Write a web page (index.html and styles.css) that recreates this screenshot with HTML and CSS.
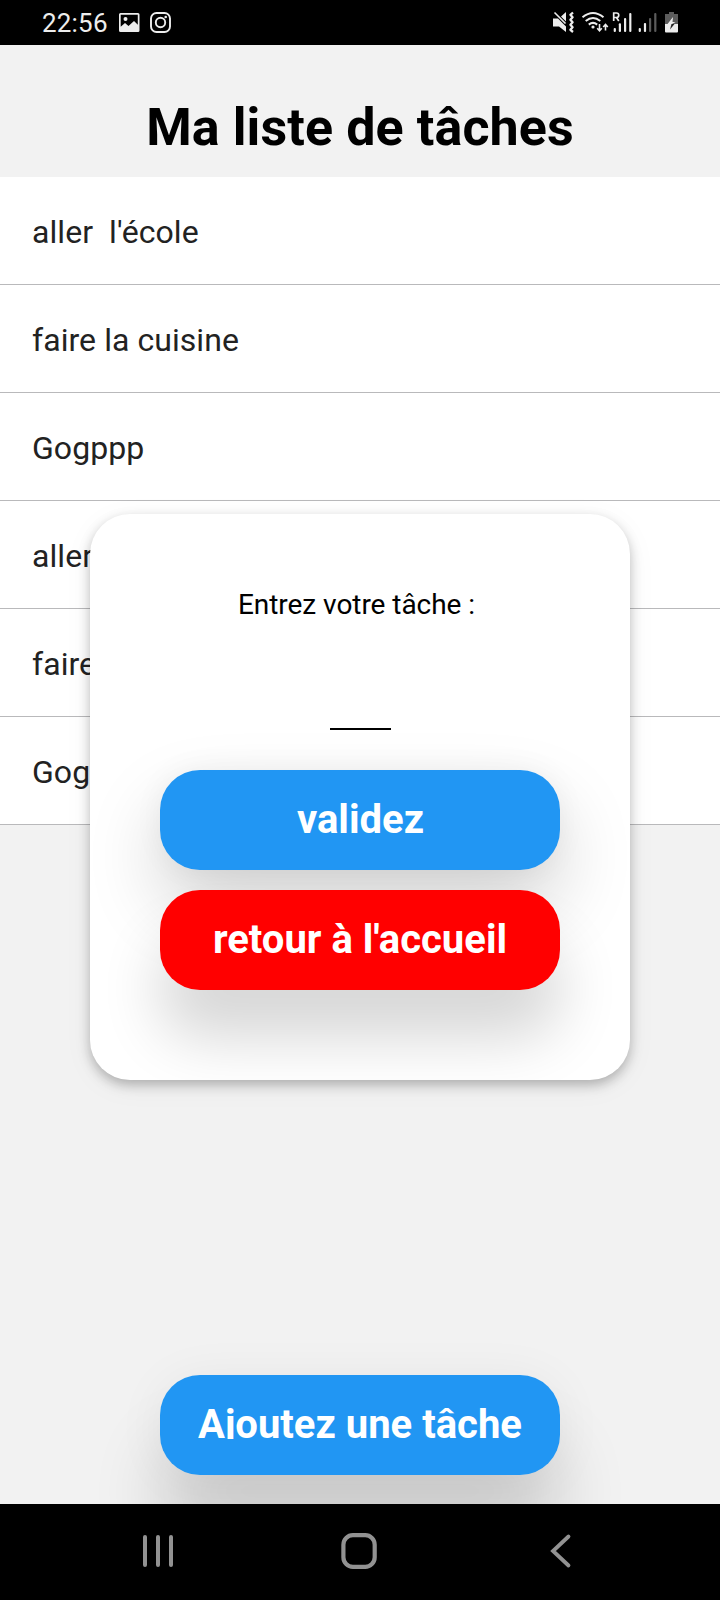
FILE: index.html
```html
<!DOCTYPE html>
<html lang="fr">
<head>
<meta charset="utf-8">
<title>Ma liste de tâches</title>
<link rel="stylesheet" href="styles.css">
</head>
<body>
<div class="phone">
  <header class="status">
    <span class="clock">22:56</span>
    <svg class="status-left" width="54" height="24" viewBox="118 10 54 24">
      <path fill="#ededed" fill-rule="evenodd" d="M120.500 13h17.500q1.500 0 1.500 1.500v16q0 1.500-1.500 1.500h-17.500q-1.500 0-1.500-1.500v-16q0-1.500 1.500-1.500zM120.700 14.700v12l4.300-3.700 3.500 3 5.500-5 3.800 3.800v-10.100zM125.500 17a2 2 0 1 1 0 4 2 2 0 0 1 0-4z"/>
      <g fill="none" stroke="#ededed" stroke-width="1.900"><rect x="151" y="13" width="19" height="19" rx="5.500"/><circle cx="160.500" cy="22.500" r="4.700"/></g><circle cx="165.700" cy="17" r="1.300" fill="#ededed"/>
    </svg>
    <svg class="status-right" width="130" height="24" viewBox="550 10 130 24">
      <path fill="#ededed" d="M553 18.500h5l8 8V32l-7-5.500h-6zM561 16.500l5-4.500v9.500z"/>
      <path d="M554.500 12.500l11 11" fill="none" stroke="#ededed" stroke-width="1.600"/>
      <path d="M573 12.500l-2.600 2.300 2.200 2.500-2.200 2.500 2.200 2.500-2.200 2.500 2.200 2.500-2.200 2.500 2.600 2.200" fill="none" stroke="#ededed" stroke-width="2.300" stroke-linejoin="round"/>
      <g fill="none" stroke="#ededed" stroke-width="2"><path d="M582.500 17.300q10.500-8.600 21 0M585.700 21q7.300-6 14.600 0M588.800 24.600q4.200-3.400 8.400 0"/></g>
      <circle cx="593" cy="27" r="1.600" fill="#ededed"/>
      <path d="M599.500 24v6.500M597.200 28.200l2.300 2.500 2.300-2.500M605.500 30.500V25M603.200 27l2.300-2.500 2.300 2.500" fill="none" stroke="#ededed" stroke-width="1.600"/>
      <path d="M613.700 21v-8h2.800a2.200 2.200 0 0 1 0 4.500h-2.800M616.400 17.500l2.400 3.500" fill="none" stroke="#ededed" stroke-width="1.700"/>
      <g fill="#ededed"><rect x="613.700" y="28" width="2.200" height="4" rx="1"/><rect x="618.800" y="23.300" width="2.200" height="8.700" rx="1"/><rect x="624" y="18" width="2.200" height="14" rx="1"/><rect x="629.200" y="13" width="2.200" height="19" rx="1"/><rect x="638.700" y="28" width="2.200" height="4" rx="1"/><rect x="643.900" y="23" width="2.200" height="9" rx="1"/></g>
      <g fill="#5c5c5c"><rect x="649" y="18" width="2.200" height="14" rx="1"/><rect x="654.200" y="13" width="2.200" height="19" rx="1"/><path d="M669 12h5v2h4v10h-13V14h4z"/></g>
      <path fill="#ededed" d="M665 24h13v7.500q0 1-1 1h-11q-1 0-1-1z"/>
      <path fill="#ededed" d="M673 17l-5.500 7h4.500l3.500-2h-3z"/>
      <path fill="#222" d="M671.500 24h3l-4.500 5.500z"/>
    </svg>
  </header>

  <main class="screen">
    <h1 class="title">Ma liste de tâches</h1>
    <ul class="tasks">
      <li class="task">aller&nbsp; l'école</li>
      <li class="task">faire la cuisine</li>
      <li class="task">Gogppp</li>
      <li class="task">aller&nbsp; l'école</li>
      <li class="task">faire la cuisine</li>
      <li class="task">Gogppp</li>
    </ul>
    <div class="actions">
      <button class="btn btn-add"><span class="btn-label">Ajoutez une tâche</span></button>
    </div>
  </main>

  <nav class="navbar">
    <svg width="36" height="40" viewBox="140 1531 36 40" stroke="#929292" stroke-width="4" stroke-linecap="round"><path d="M145 1537v28M158 1537v28M171 1537v28"/></svg>
    <svg class="nav-home" width="40" height="40" viewBox="339 1531 40 40" fill="none" stroke="#929292" stroke-width="4.200"><rect x="343.400" y="1535.200" width="31.300" height="31.600" rx="9.500"/></svg>
    <svg class="nav-back" width="26" height="40" viewBox="547 1531 26 40" fill="none" stroke="#929292" stroke-width="3.800" stroke-linecap="round"><path d="M568.500 1536.500L553 1551l15.500 14.500"/></svg>
  </nav>

  <section class="modal">
    <p class="prompt">Entrez votre tâche :</p>
    <div class="field"></div>
    <button class="btn btn-ok"><span class="btn-label">validez</span></button>
    <button class="btn btn-back"><span class="btn-label">retour à l'accueil</span></button>
  </section>
</div>
</body>
</html>
```
FILE: styles.css
```css
* { box-sizing: border-box; }
body { margin: 0; font-family: Roboto, sans-serif; }
.phone {
  position: relative;
  display: flex;
  flex-direction: column;
  width: 720px;
  height: 1600px;
  overflow: hidden;
  background: #f2f2f2;
}
.status {
  display: flex;
  align-items: center;
  flex: none;
  height: 45px;
  padding: 0 40px 0 42px;
  background: #000;
}
.clock { width: 76px; font-size: 26px; line-height: 30px; letter-spacing: .2px; color: #ededed; }
.status svg { display: block; margin-top: -1px; }
.status .status-right { margin-left: auto; }
.screen { display: flex; flex-direction: column; flex: 1; overflow: hidden; }
.title {
  flex: none;
  height: 132px;
  margin: 0;
  padding-top: 52px;
  font-size: 52px;
  line-height: 62px;
  font-weight: 700;
  letter-spacing: .1px;
  text-align: center;
  color: #000;
}
.tasks { margin: 0; padding: 0; list-style: none; }
.task {
  height: 108px;
  padding-left: 32px;
  border-bottom: 1px solid #b9b9bb;
  background: #fff;
  font-size: 32px;
  line-height: 111px;
  letter-spacing: .06px;
  color: #222;
}
.actions { display: flex; justify-content: center; margin-top: auto; padding-bottom: 29px; }
.btn {
  display: flex;
  justify-content: center;
  align-items: center;
  flex: none;
  width: 400px;
  height: 100px;
  padding: 0;
  border: 0;
  border-radius: 40px;
  background: #2196f3;
  box-shadow: 0 36px 76px rgba(0, 0, 0, .18), 0 0 30px rgba(0, 0, 0, .05);
  font: 700 40px/46px Roboto, sans-serif;
  color: #fff;
}
.btn-ok { padding-left: 1px; }
/* offset far enough down to stay clear of the blue button above */
.btn-back { margin-top: 20px; background: #f00; box-shadow: 0 48px 60px rgba(0, 0, 0, .16); }
.btn-add { box-shadow: 0 66px 70px rgba(0, 0, 0, .16), 0 4px 50px rgba(0, 0, 0, .06); }
.btn-add .btn-label { height: 37px; margin-bottom: 9px; overflow: hidden; }
.navbar {
  display: flex;
  flex: none;
  height: 96px;
  padding: 27px 0 0 140px;
  background: #000;
}
.nav-home { margin-left: 163px; }
.nav-back { margin-left: 168px; }
.modal {
  position: absolute;
  left: 90px;
  top: 514px;
  display: flex;
  flex-direction: column;
  align-items: center;
  width: 540px;
  height: 566px;
  padding-top: 74px;
  overflow: hidden;
  border-radius: 40px;
  background: #fff;
  box-shadow: 0 5px 12px rgba(0, 0, 0, .25), 0 6px 30px rgba(0, 0, 0, .05);
}
.prompt { margin: 0; padding-right: 7px; font-size: 28px; line-height: 33px; letter-spacing: -.05px; color: #000; }
.field { flex: none; width: 61px; height: 109px; margin-bottom: 40px; border-bottom: 2px solid #000; }
```
